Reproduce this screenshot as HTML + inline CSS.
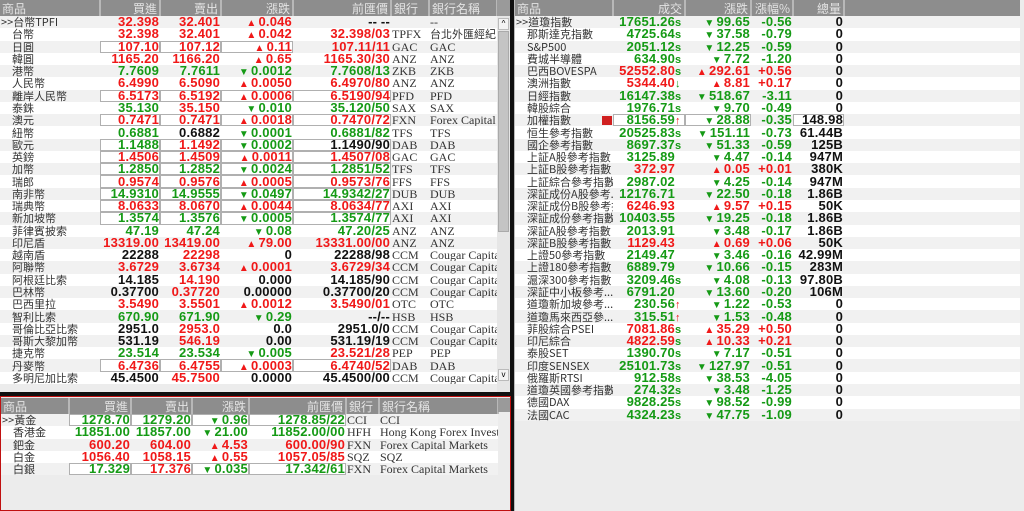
<!DOCTYPE html>
<html><head><meta charset="utf-8"><style>
*{margin:0;padding:0;box-sizing:border-box}
body{width:1024px;height:511px;background:#101010;position:relative;overflow:hidden;font-family:"Liberation Sans","Noto Sans CJK TC",sans-serif}
.p{position:absolute;background:#ececec;overflow:hidden}
table{border-collapse:collapse;table-layout:fixed;position:absolute;left:0;top:0}
th{height:16px;line-height:15px;background:#8d8d8d;color:#e4e4e4;font-weight:normal;font-size:12px;text-align:right;padding:0 2px;border-right:2px solid #b8b8b8;white-space:nowrap;overflow:hidden;font-family:"Noto Sans CJK TC",sans-serif}
th.l{text-align:left}
tr{height:12.27px}
td{height:12.27px;padding:0 1px;white-space:nowrap;overflow:hidden;font-weight:bold;font-size:13px;line-height:12px;text-align:right;letter-spacing:0.2px}
td>span{line-height:0}
tr:nth-child(odd) td{background:#fff}
tr:nth-child(even) td{background:#f1f1f1}
td.n{text-align:left;font-weight:normal;font-size:11px;color:#333;padding-left:12px;letter-spacing:0;font-family:"Noto Sans CJK TC",sans-serif;text-overflow:clip}
td.n0{padding-left:1px}
td.c{text-align:left;font-weight:normal;font-size:12px;color:#333;font-family:"Liberation Serif",serif;letter-spacing:0}
td.cj{font-family:"Noto Sans CJK TC",sans-serif;font-size:11px}
tr.r td{color:#f01818}tr.g td{color:#159a15}
td.r{color:#f01818!important}td.g{color:#159a15!important}td.k{color:#111!important}
td.n,td.c{color:#333!important}
td.b{box-shadow:inset 0 0 0 1px #b0b0b0,inset 0 0 0 2px #fff;background:#fff!important}
.t{font-size:10px;margin-right:2px}
.s{display:inline-block;width:9px;text-align:left;font-size:11px;color:#159a15}
.su{color:#f01818}
</style></head><body>

<div class="p" style="left:0;top:0;width:510px;height:392px">
<table style="width:497px">
<colgroup><col style="width:100px"><col style="width:60px"><col style="width:61px"><col style="width:72px"><col style="width:98px"><col style="width:38px"><col style="width:68px"></colgroup>
<tr><th class="l">商品</th><th>買進</th><th>賣出</th><th>漲跌</th><th>前匯價</th><th class="l">銀行</th><th class="l">銀行名稱</th></tr>
<tr class="r"><td class="n n0">&gt;&gt;台幣TPFI</td><td>32.398</td><td>32.401</td><td><span class="t">▲</span>0.046</td><td class="k">-- --</td><td class="c"></td><td class="c">--</td></tr>
<tr class="r"><td class="n">台幣</td><td>32.398</td><td>32.401</td><td><span class="t">▲</span>0.042</td><td>32.398/03</td><td class="c">TPFX</td><td class="c cj">台北外匯經紀</td></tr>
<tr class="r"><td class="n">日圓</td><td class="b">107.10</td><td class="b">107.12</td><td class="b"><span class="t">▲</span>0.11</td><td>107.11/11</td><td class="c">GAC</td><td class="c">GAC</td></tr>
<tr class="r"><td class="n">韓圓</td><td>1165.20</td><td>1166.20</td><td><span class="t">▲</span>0.65</td><td>1165.30/30</td><td class="c">ANZ</td><td class="c">ANZ</td></tr>
<tr class="g"><td class="n">港幣</td><td>7.7609</td><td>7.7611</td><td><span class="t">▼</span>0.0012</td><td>7.7608/13</td><td class="c">ZKB</td><td class="c">ZKB</td></tr>
<tr class="r"><td class="n">人民幣</td><td>6.4990</td><td>6.5090</td><td><span class="t">▲</span>0.0050</td><td>6.4970/80</td><td class="c">ANZ</td><td class="c">ANZ</td></tr>
<tr class="r"><td class="n">離岸人民幣</td><td class="b">6.5173</td><td class="b">6.5192</td><td class="b"><span class="t">▲</span>0.0006</td><td class="b">6.5190/94</td><td class="c">PFD</td><td class="c">PFD</td></tr>
<tr class="g"><td class="n">泰銖</td><td>35.130</td><td class="r">35.150</td><td><span class="t">▼</span>0.010</td><td>35.120/50</td><td class="c">SAX</td><td class="c">SAX</td></tr>
<tr class="r"><td class="n">澳元</td><td class="b">0.7471</td><td class="b">0.7471</td><td class="b"><span class="t">▲</span>0.0018</td><td class="b">0.7470/72</td><td class="c">FXN</td><td class="c">Forex Capital ...</td></tr>
<tr class="g"><td class="n">紐幣</td><td>0.6881</td><td class="k">0.6882</td><td><span class="t">▼</span>0.0001</td><td>0.6881/82</td><td class="c">TFS</td><td class="c">TFS</td></tr>
<tr class="g"><td class="n">歐元</td><td class="b">1.1488</td><td class="b r">1.1492</td><td class="b"><span class="t">▼</span>0.0002</td><td class="b k">1.1490/90</td><td class="c">DAB</td><td class="c">DAB</td></tr>
<tr class="r"><td class="n">英鎊</td><td class="b">1.4506</td><td class="b">1.4509</td><td class="b"><span class="t">▲</span>0.0011</td><td class="b">1.4507/08</td><td class="c">GAC</td><td class="c">GAC</td></tr>
<tr class="g"><td class="n">加幣</td><td class="b">1.2850</td><td class="b">1.2852</td><td class="b"><span class="t">▼</span>0.0024</td><td class="b">1.2851/52</td><td class="c">TFS</td><td class="c">TFS</td></tr>
<tr class="r"><td class="n">瑞郎</td><td class="b">0.9574</td><td class="b">0.9576</td><td class="b"><span class="t">▲</span>0.0005</td><td class="b">0.9573/76</td><td class="c">FFS</td><td class="c">FFS</td></tr>
<tr class="g"><td class="n">南非幣</td><td class="b">14.9310</td><td class="b">14.9555</td><td class="b"><span class="t">▼</span>0.0497</td><td class="b">14.9342/27</td><td class="c">DUB</td><td class="c">DUB</td></tr>
<tr class="r"><td class="n">瑞典幣</td><td class="b">8.0633</td><td class="b">8.0670</td><td class="b"><span class="t">▲</span>0.0044</td><td class="b">8.0634/77</td><td class="c">AXI</td><td class="c">AXI</td></tr>
<tr class="g"><td class="n">新加坡幣</td><td class="b">1.3574</td><td class="b">1.3576</td><td class="b"><span class="t">▼</span>0.0005</td><td class="b">1.3574/77</td><td class="c">AXI</td><td class="c">AXI</td></tr>
<tr class="g"><td class="n">菲律賓披索</td><td>47.19</td><td>47.24</td><td><span class="t">▼</span>0.08</td><td>47.20/25</td><td class="c">ANZ</td><td class="c">ANZ</td></tr>
<tr class="r"><td class="n">印尼盾</td><td>13319.00</td><td>13419.00</td><td><span class="t">▲</span>79.00</td><td>13331.00/00</td><td class="c">ANZ</td><td class="c">ANZ</td></tr>
<tr><td class="n">越南盾</td><td class="k">22288</td><td class="r">22298</td><td class="k">0</td><td class="k">22288/98</td><td class="c">CCM</td><td class="c">Cougar Capita...</td></tr>
<tr class="r"><td class="n">阿聯幣</td><td>3.6729</td><td>3.6734</td><td><span class="t">▲</span>0.0001</td><td>3.6729/34</td><td class="c">CCM</td><td class="c">Cougar Capita...</td></tr>
<tr><td class="n">阿根廷比索</td><td class="k">14.185</td><td class="r">14.190</td><td class="k">0.000</td><td class="k">14.185/90</td><td class="c">CCM</td><td class="c">Cougar Capita...</td></tr>
<tr><td class="n">巴林幣</td><td class="k">0.37700</td><td class="r">0.37720</td><td class="k">0.00000</td><td class="k">0.37700/20</td><td class="c">CCM</td><td class="c">Cougar Capita...</td></tr>
<tr class="r"><td class="n">巴西里拉</td><td>3.5490</td><td>3.5501</td><td><span class="t">▲</span>0.0012</td><td>3.5490/01</td><td class="c">OTC</td><td class="c">OTC</td></tr>
<tr class="g"><td class="n">智利比索</td><td>670.90</td><td>671.90</td><td><span class="t">▼</span>0.29</td><td class="k">--/--</td><td class="c">HSB</td><td class="c">HSB</td></tr>
<tr><td class="n">哥倫比亞比索</td><td class="k">2951.0</td><td class="r">2953.0</td><td class="k">0.0</td><td class="k">2951.0/0</td><td class="c">CCM</td><td class="c">Cougar Capita...</td></tr>
<tr><td class="n">哥斯大黎加幣</td><td class="k">531.19</td><td class="r">546.19</td><td class="k">0.00</td><td class="k">531.19/19</td><td class="c">CCM</td><td class="c">Cougar Capita...</td></tr>
<tr class="g"><td class="n">捷克幣</td><td>23.514</td><td>23.534</td><td><span class="t">▼</span>0.005</td><td class="r">23.521/28</td><td class="c">PEP</td><td class="c">PEP</td></tr>
<tr class="r"><td class="n">丹麥幣</td><td class="b">6.4736</td><td class="b">6.4755</td><td class="b"><span class="t">▲</span>0.0003</td><td class="b">6.4740/52</td><td class="c">DAB</td><td class="c">DAB</td></tr>
<tr><td class="n">多明尼加比索</td><td class="k">45.4500</td><td class="r">45.7500</td><td class="k">0.0000</td><td class="k">45.4500/00</td><td class="c">CCM</td><td class="c">Cougar Capita...</td></tr>
</table>
<div style="position:absolute;left:497px;top:0;width:13px;height:16px;background:#9a9a9a"></div>
<div style="position:absolute;left:497px;top:16px;width:13px;height:376px;background:#e6e6e6"></div>
<div style="position:absolute;left:498px;top:18px;width:11px;height:12px;background:#f4f4f4;border:1px solid #bbb;font-size:8px;text-align:center;line-height:10px">^</div>
<div style="position:absolute;left:498px;top:31px;width:11px;height:201px;background:#c4c4c4;border:1px solid #aaa"></div>
<div style="position:absolute;left:498px;top:369px;width:11px;height:12px;background:#f4f4f4;border:1px solid #bbb;font-size:8px;text-align:center;line-height:10px">v</div>
</div>

<div class="p" style="left:0;top:396px;width:511px;height:115px;border:1px solid #c01010">
<table style="width:497px;top:1px">
<colgroup><col style="width:68px"><col style="width:62px"><col style="width:61px"><col style="width:57px"><col style="width:97px"><col style="width:33px"><col style="width:119px"></colgroup>
<tr style="height:14px"><th class="l" style="height:14px;line-height:13px">商品</th><th style="height:14px;line-height:13px">買進</th><th>賣出</th><th>漲跌</th><th>前匯價</th><th class="l">銀行</th><th class="l">銀行名稱</th></tr>
<tr class="g"><td class="n n0">&gt;&gt;黃金</td><td class="b">1278.70</td><td class="b">1279.20</td><td class="b"><span class="t">▼</span>0.96</td><td class="b">1278.85/22</td><td class="c">CCI</td><td class="c">CCI</td></tr>
<tr class="g"><td class="n">香港金</td><td>11851.00</td><td>11857.00</td><td><span class="t">▼</span>21.00</td><td>11852.00/00</td><td class="c">HFH</td><td class="c">Hong Kong Forex Investm...</td></tr>
<tr class="r"><td class="n">鈀金</td><td>600.20</td><td>604.00</td><td><span class="t">▲</span>4.53</td><td>600.00/90</td><td class="c">FXN</td><td class="c">Forex Capital Markets</td></tr>
<tr class="r"><td class="n">白金</td><td>1056.40</td><td>1058.15</td><td><span class="t">▲</span>0.55</td><td>1057.05/85</td><td class="c">SQZ</td><td class="c">SQZ</td></tr>
<tr class="g"><td class="n">白銀</td><td class="b">17.329</td><td class="b r">17.376</td><td class="b"><span class="t">▼</span>0.035</td><td class="b">17.342/61</td><td class="c">FXN</td><td class="c">Forex Capital Markets</td></tr>
</table>
<div style="position:absolute;left:497px;top:1px;width:12px;height:14px;background:#9a9a9a"></div>
</div>

<div class="p" style="left:514px;top:0;width:510px;height:511px;border-left:1px solid #bbb">
<table style="width:505px">
<colgroup><col style="width:98px"><col style="width:72px"><col style="width:66px"><col style="width:42px"><col style="width:51px"><col style="width:176px"></colgroup>
<tr><th class="l">商品</th><th>成交</th><th>漲跌</th><th>漲幅%</th><th>總量</th><th style="border-right:0"></th></tr>
<tr class="g"><td class="n n0">&gt;&gt;道瓊指數</td><td>17651.26<span class="s">s</span></td><td><span class="t">▼</span>99.65</td><td>-0.56</td><td class="k">0</td><td></td></tr>
<tr class="g"><td class="n">那斯達克指數</td><td>4725.64<span class="s">s</span></td><td><span class="t">▼</span>37.58</td><td>-0.79</td><td class="k">0</td><td></td></tr>
<tr class="g"><td class="n">S&amp;P500</td><td>2051.12<span class="s">s</span></td><td><span class="t">▼</span>12.25</td><td>-0.59</td><td class="k">0</td><td></td></tr>
<tr class="g"><td class="n">費城半導體</td><td>634.90<span class="s">s</span></td><td><span class="t">▼</span>7.72</td><td>-1.20</td><td class="k">0</td><td></td></tr>
<tr class="r"><td class="n">巴西BOVESPA</td><td>52552.80<span class="s">s</span></td><td><span class="t">▲</span>292.61</td><td>+0.56</td><td class="k">0</td><td></td></tr>
<tr class="r"><td class="n">澳洲指數</td><td>5344.40<span class="s">↓</span></td><td><span class="t">▲</span>8.81</td><td>+0.17</td><td class="k">0</td><td></td></tr>
<tr class="g"><td class="n">日經指數</td><td>16147.38<span class="s">s</span></td><td><span class="t">▼</span>518.67</td><td>-3.11</td><td class="k">0</td><td></td></tr>
<tr class="g"><td class="n">韓股綜合</td><td>1976.71<span class="s">s</span></td><td><span class="t">▼</span>9.70</td><td>-0.49</td><td class="k">0</td><td></td></tr>
<tr class="g"><td class="n" style="position:relative">加權指數<span style="position:absolute;left:87px;top:2px;width:10px;height:9px;background:#d02020;display:block"></span></td><td class="b">8156.59<span class="s su">↑</span></td><td class="b"><span class="t">▼</span>28.88</td><td>-0.35</td><td class="b k">148.98</td><td></td></tr>
<tr class="g"><td class="n">恒生參考指數</td><td>20525.83<span class="s">s</span></td><td><span class="t">▼</span>151.11</td><td>-0.73</td><td class="k">61.44B</td><td></td></tr>
<tr class="g"><td class="n">國企參考指數</td><td>8697.37<span class="s">s</span></td><td><span class="t">▼</span>51.33</td><td>-0.59</td><td class="k">125B</td><td></td></tr>
<tr class="g"><td class="n">上証A股參考指數</td><td>3125.89<span class="s"></span></td><td><span class="t">▼</span>4.47</td><td>-0.14</td><td class="k">947M</td><td></td></tr>
<tr class="r"><td class="n">上証B股參考指數</td><td>372.97<span class="s"></span></td><td><span class="t">▲</span>0.05</td><td>+0.01</td><td class="k">380K</td><td></td></tr>
<tr class="g"><td class="n">上証綜合參考指數</td><td>2987.02<span class="s"></span></td><td><span class="t">▼</span>4.25</td><td>-0.14</td><td class="k">947M</td><td></td></tr>
<tr class="g"><td class="n">深証成份A股參考...</td><td>12176.71<span class="s"></span></td><td><span class="t">▼</span>22.50</td><td>-0.18</td><td class="k">1.86B</td><td></td></tr>
<tr class="r"><td class="n">深証成份B股參考指數</td><td>6246.93<span class="s"></span></td><td><span class="t">▲</span>9.57</td><td>+0.15</td><td class="k">50K</td><td></td></tr>
<tr class="g"><td class="n">深証成份參考指數</td><td>10403.55<span class="s"></span></td><td><span class="t">▼</span>19.25</td><td>-0.18</td><td class="k">1.86B</td><td></td></tr>
<tr class="g"><td class="n">深証A股參考指數</td><td>2013.91<span class="s"></span></td><td><span class="t">▼</span>3.48</td><td>-0.17</td><td class="k">1.86B</td><td></td></tr>
<tr class="r"><td class="n">深証B股參考指數</td><td>1129.43<span class="s"></span></td><td><span class="t">▲</span>0.69</td><td>+0.06</td><td class="k">50K</td><td></td></tr>
<tr class="g"><td class="n">上證50參考指數</td><td>2149.47<span class="s"></span></td><td><span class="t">▼</span>3.46</td><td>-0.16</td><td class="k">42.99M</td><td></td></tr>
<tr class="g"><td class="n">上證180參考指數</td><td>6889.79<span class="s"></span></td><td><span class="t">▼</span>10.66</td><td>-0.15</td><td class="k">283M</td><td></td></tr>
<tr class="g"><td class="n">滬深300參考指數</td><td>3209.46<span class="s">s</span></td><td><span class="t">▼</span>4.08</td><td>-0.13</td><td class="k">97.80B</td><td></td></tr>
<tr class="g"><td class="n">深証中小板參考...</td><td>6791.20<span class="s"></span></td><td><span class="t">▼</span>13.60</td><td>-0.20</td><td class="k">106M</td><td></td></tr>
<tr class="g"><td class="n">道瓊新加坡參考...</td><td>230.56<span class="s su">↑</span></td><td><span class="t">▼</span>1.22</td><td>-0.53</td><td class="k">0</td><td></td></tr>
<tr class="g"><td class="n">道瓊馬來西亞參...</td><td>315.51<span class="s su">↑</span></td><td><span class="t">▼</span>1.53</td><td>-0.48</td><td class="k">0</td><td></td></tr>
<tr class="r"><td class="n">菲股綜合PSEI</td><td>7081.86<span class="s">s</span></td><td><span class="t">▲</span>35.29</td><td>+0.50</td><td class="k">0</td><td></td></tr>
<tr class="r"><td class="n">印尼綜合</td><td>4822.59<span class="s">s</span></td><td><span class="t">▲</span>10.33</td><td>+0.21</td><td class="k">0</td><td></td></tr>
<tr class="g"><td class="n">泰股SET</td><td>1390.70<span class="s">s</span></td><td><span class="t">▼</span>7.17</td><td>-0.51</td><td class="k">0</td><td></td></tr>
<tr class="g"><td class="n">印度SENSEX</td><td>25101.73<span class="s">s</span></td><td><span class="t">▼</span>127.97</td><td>-0.51</td><td class="k">0</td><td></td></tr>
<tr class="g"><td class="n">俄羅斯RTSI</td><td>912.58<span class="s">s</span></td><td><span class="t">▼</span>38.53</td><td>-4.05</td><td class="k">0</td><td></td></tr>
<tr class="g"><td class="n">道瓊英國參考指數</td><td>274.32<span class="s">s</span></td><td><span class="t">▼</span>3.48</td><td>-1.25</td><td class="k">0</td><td></td></tr>
<tr class="g"><td class="n">德國DAX</td><td>9828.25<span class="s">s</span></td><td><span class="t">▼</span>98.52</td><td>-0.99</td><td class="k">0</td><td></td></tr>
<tr class="g"><td class="n">法國CAC</td><td>4324.23<span class="s">s</span></td><td><span class="t">▼</span>47.75</td><td>-1.09</td><td class="k">0</td><td></td></tr>
</table>
</div>
</body></html>
